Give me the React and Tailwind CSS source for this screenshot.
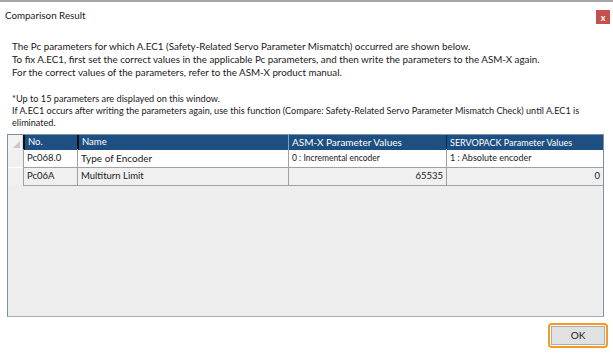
import React from "react";

const font = { fontFamily: 'Lato, "Noto Sans", sans-serif' };

export default function App() {
  return (
    <div className="w-[613px] h-[360px] bg-white flex flex-col border-t-2 border-[#a6a6a6] text-[#1a1a1a]" style={font}>
      <div className="h-[28px] flex items-center justify-between pl-[5px] pr-[3px]">
        <span className="text-[9.8px] leading-none">Comparison Result</span>
        <div className="w-[14px] h-[14px] bg-[#c4504f] flex items-center justify-center text-white text-[9px] leading-none font-bold mt-[2px]">x</div>
      </div>
      <div className="pl-[12px] pt-[10px] text-[9.8px] leading-[13px]">
        <div>The Pc parameters for which A.EC1 (Safety-Related Servo Parameter Mismatch) occurred are shown below.</div>
        <div>To fix A.EC1, first set the correct values in the applicable Pc parameters, and then write the parameters to the ASM-X again.</div>
        <div>For the correct values of the parameters, refer to the ASM-X product manual.</div>
        <div className="h-[13px]" />
        <div className="text-[9.2px]">*Up to 15 parameters are displayed on this window.</div>
        <div className="text-[9.1px] leading-[12px] whitespace-nowrap">If A.EC1 occurs after writing the parameters again, use this function (Compare: Safety-Related Servo Parameter Mismatch Check) until A.EC1 is</div>
        <div className="text-[9.1px] leading-[11px]">eliminated.</div>
      </div>
      <div className="ml-[7px] mt-[6px] w-[597px] h-[183px] border border-[#7c90a8] border-b-[#a3adb8] bg-[#eeeeee] text-[9.5px]">
        <div className="grid grid-cols-[15px_54px_211px_158px_157px] h-[14px]">
          <div className="bg-[#f3f3f3] relative border-r border-[#d8d8d8]">
            <svg className="absolute right-[2px] bottom-[2px]" width="7" height="7" viewBox="0 0 7 7"><polygon points="7,0 7,7 0,7" fill="#c8c8c8" /></svg>
          </div>
          <div className="bg-[#1e4f82] text-white pl-[3px] flex items-center border-l-2 border-[#111]">No.</div>
          <div className="bg-[#1e4f82] text-white pl-[3px] flex items-center border-l-2 border-[#111]">Name</div>
          <div className="bg-[#1e4f82] text-white pl-[3px] flex items-center border-l border-[#7fa3c8] text-[10px]">ASM-X Parameter Values</div>
          <div className="bg-[#1e4f82] text-white pl-[3px] flex items-center border-l border-[#0e2a48] text-[9px]">SERVOPACK Parameter Values</div>
        </div>
        <div className="grid grid-cols-[15px_54px_211px_158px_157px] h-[19px] bg-white">
          <div className="bg-[#f0f0f0] border-b border-white" />
          <div className="pl-[3px] flex items-center border-l border-b border-[#a0a0a0]">Pc068.0</div>
          <div className="pl-[3px] flex items-center border-l border-b border-[#a0a0a0] text-[10px]">Type of Encoder</div>
          <div className="pl-[3px] flex items-center border-l border-b border-[#a0a0a0] text-[8.5px]">0 : Incremental encoder</div>
          <div className="pl-[3px] flex items-center border-l border-b border-[#a0a0a0] text-[9px]">1 : Absolute encoder</div>
        </div>
        <div className="grid grid-cols-[15px_54px_211px_158px_157px] h-[18px] bg-[#f0f0f0]">
          <div className="bg-[#f0f0f0]" />
          <div className="pl-[3px] flex items-center border-l border-b border-[#a0a0a0]">Pc06A</div>
          <div className="pl-[3px] flex items-center border-l border-b border-[#a0a0a0]">Multiturn Limit</div>
          <div className="pr-[3px] flex items-center justify-end border-l border-b border-[#a0a0a0]">65535</div>
          <div className="pr-[3px] flex items-center justify-end border-l border-b border-[#a0a0a0]">0</div>
        </div>
      </div>
      <div className="flex justify-end pr-[5px] mt-[6px]">
        <div className="w-[60px] h-[25px] rounded-[4px] border-2 border-[#f59a23] p-[1px]">
          <div className="w-full h-full bg-[#e1e1e1] border border-[#adadad] flex items-center justify-center text-[10px]">OK</div>
        </div>
      </div>
    </div>
  );
}
